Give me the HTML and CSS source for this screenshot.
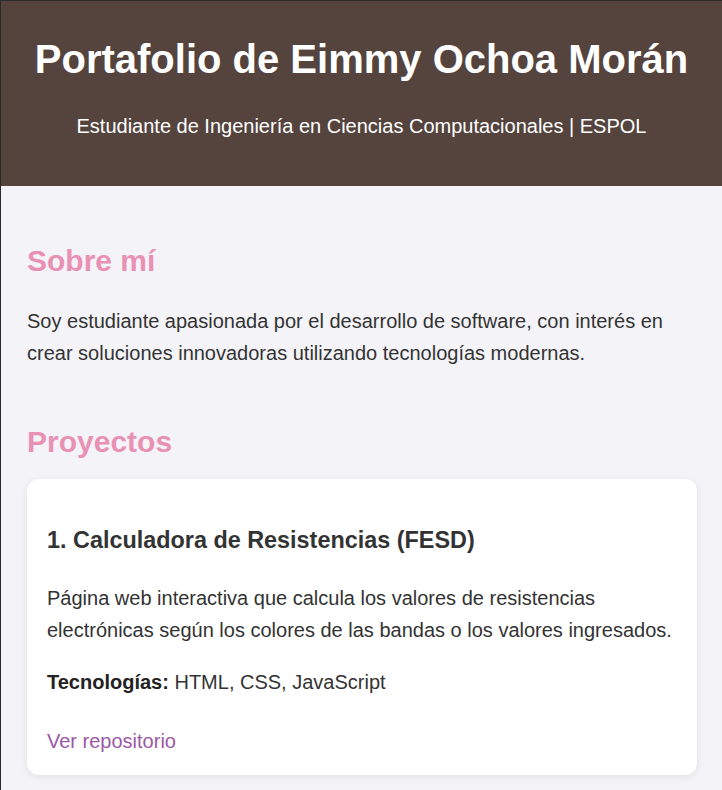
FILE: index.html
```html
<!DOCTYPE html>
<html lang="es">
<head>
<meta charset="utf-8">
<title>Portafolio de Eimmy Ochoa Morán</title>
<link rel="stylesheet" href="styles.css">
</head>
<body>
<div class="frame">
  <header class="hero">
    <h1 class="hero-title">Portafolio de Eimmy Ochoa Morán</h1>
    <p class="hero-sub">Estudiante de Ingeniería en Ciencias Computacionales | ESPOL</p>
  </header>
  <main class="content">
    <section class="about">
      <h2 class="section-title">Sobre mí</h2>
      <p class="text">Soy estudiante apasionada por el desarrollo de software, con interés en crear soluciones innovadoras utilizando tecnologías modernas.</p>
    </section>
    <section class="projects">
      <h2 class="section-title">Proyectos</h2>
      <article class="card">
        <h3 class="card-title">1. Calculadora de Resistencias (FESD)</h3>
        <p class="text card-desc">Página web interactiva que calcula los valores de resistencias electrónicas según los colores de las bandas o los valores ingresados.</p>
        <p class="text card-tech"><strong>Tecnologías:</strong> HTML, CSS, JavaScript</p>
        <p class="text card-link-row"><a class="card-link" href="#">Ver repositorio</a></p>
      </article>
    </section>
  </main>
</div>
</body>
</html>
```

FILE: styles.css
```css
html, body {
  margin: 0;
  padding: 0;
  height: 100%;
}
body {
  background: #f4f3f8;
  font-family: "Liberation Sans", Arial, sans-serif;
  color: #333;
  overflow: hidden;
}
.frame {
  border-top: 1px solid #2b2b2b;
  border-left: 1px solid #2b2b2b;
  min-height: 100%;
  box-sizing: border-box;
}
.hero {
  background: #55433e;
  color: #fff;
  text-align: center;
  padding: 37px 20px 48px;
}
.hero-title {
  margin: 0;
  font-size: 40px;
  line-height: 42px;
  font-weight: bold;
}
.hero-sub {
  margin: 35px 0 0;
  font-size: 20px;
  line-height: 23px;
}
.content {
  padding: 0 25px 0 26px;
}
.section-title {
  margin: 0;
  font-size: 30px;
  line-height: 36px;
  font-weight: bold;
  color: #e991b4;
}
.about {
  padding-top: 57px;
}
.about .section-title {
  margin-bottom: 26px;
}
.text {
  margin: 0;
  font-size: 20px;
  line-height: 32px;
}
.projects {
  padding-top: 55px;
}
.projects .section-title {
  margin-bottom: 19px;
}
.card {
  background: #fff;
  border-radius: 12px;
  box-shadow: 0 2px 8px rgba(0, 0, 0, 0.08);
  padding: 24px 20px 18px;
}
.card-title {
  margin: 24px 0 28px;
  font-size: 23.4px;
  line-height: 27px;
  font-weight: bold;
  color: #333;
}
.card-tech {
  margin-top: 20px;
  color: #333;
}
.card-tech strong {
  color: #222;
}
.card-link-row {
  margin-top: 27px;
}
.card-link {
  color: #9c59a5;
  text-decoration: none;
}
```
